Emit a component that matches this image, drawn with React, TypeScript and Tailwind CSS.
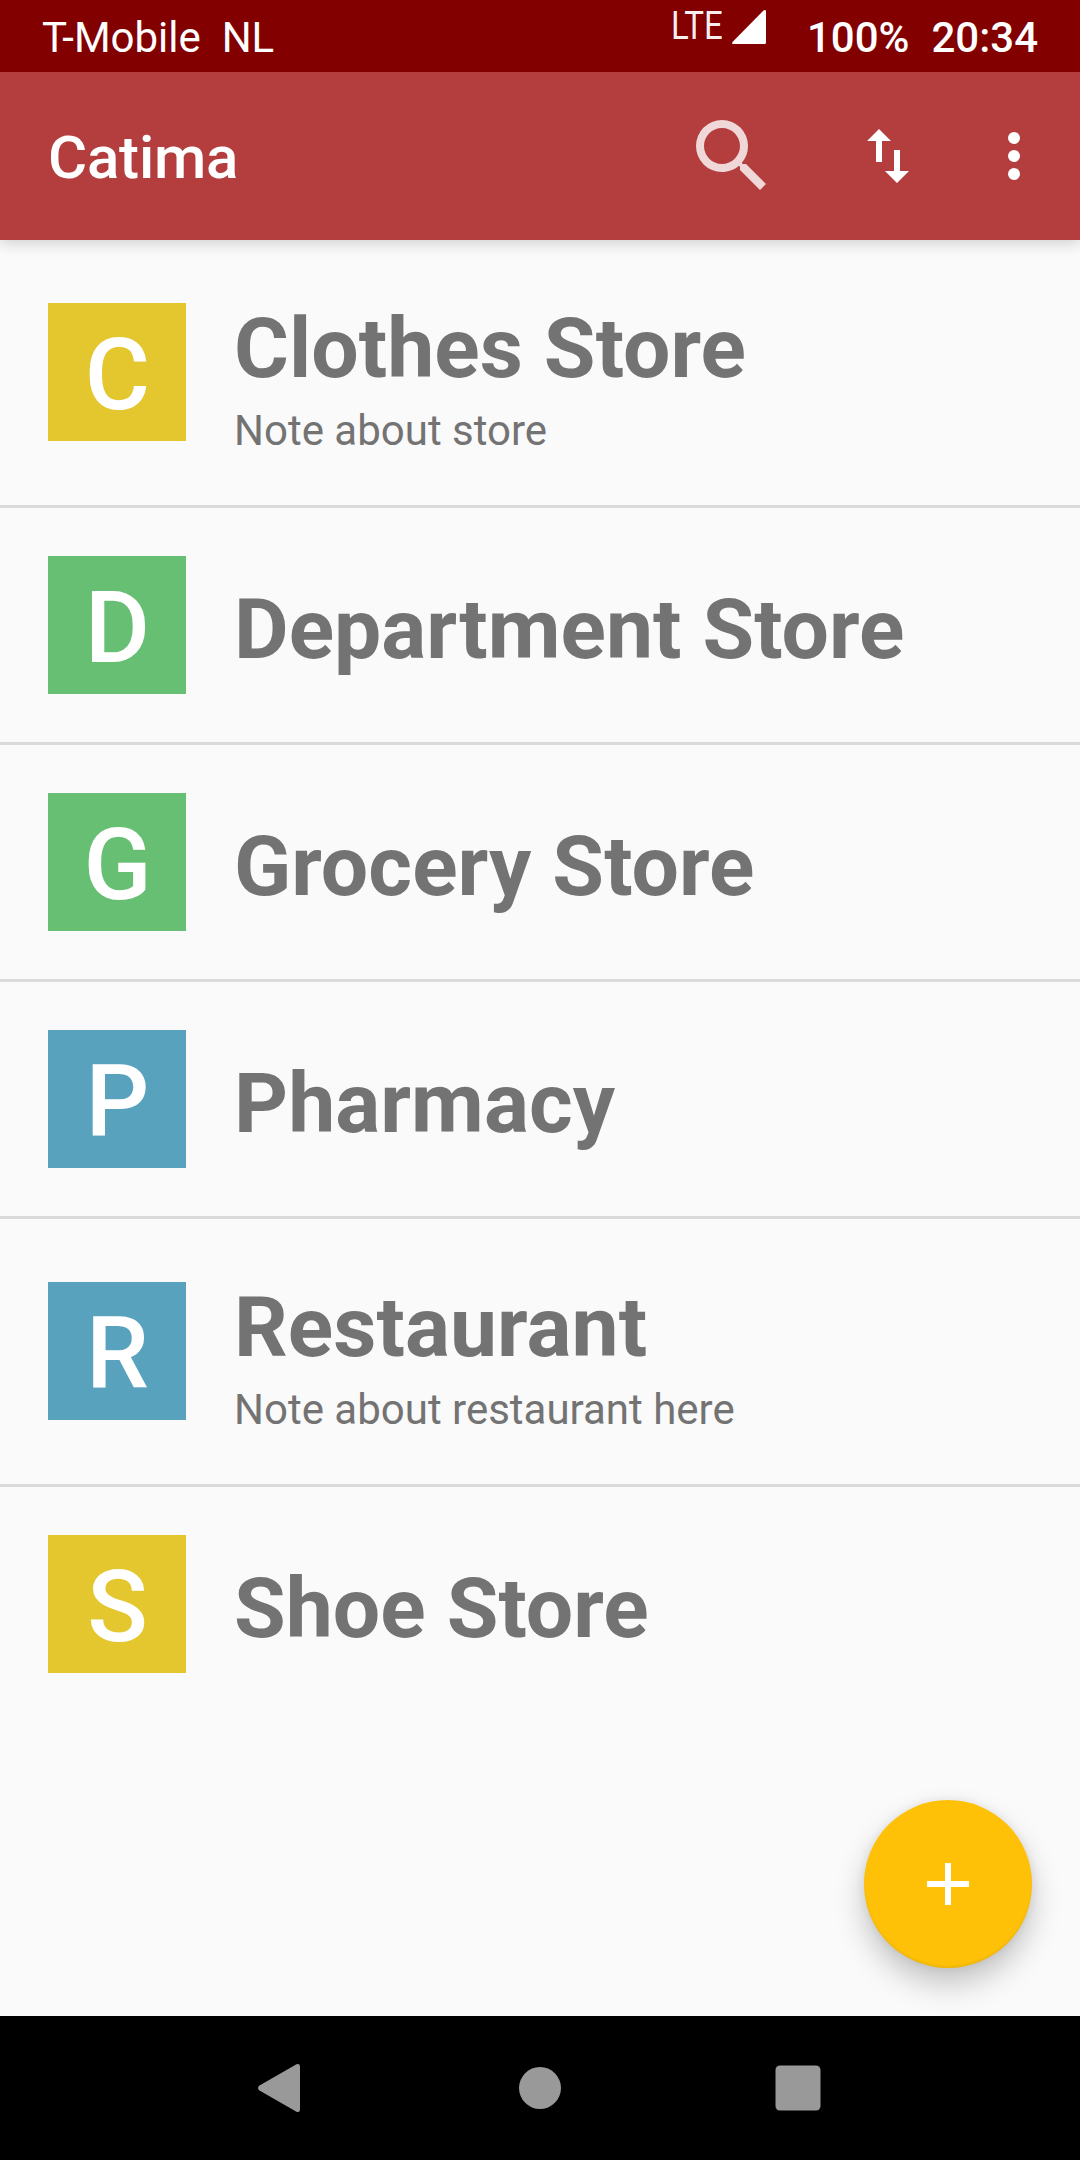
type Card = { letter: string; name: string; note?: string; tile: string };

const cards: Card[] = [
  { letter: 'C', name: 'Clothes Store', note: 'Note about store', tile: 'bg-[#e4c62e]' },
  { letter: 'D', name: 'Department Store', tile: 'bg-[#67bf74]' },
  { letter: 'G', name: 'Grocery Store', tile: 'bg-[#67bf74]' },
  { letter: 'P', name: 'Pharmacy', tile: 'bg-[#59a2be]' },
  { letter: 'R', name: 'Restaurant', note: 'Note about restaurant here', tile: 'bg-[#59a2be]' },
  { letter: 'S', name: 'Shoe Store', tile: 'bg-[#e4c62e]' },
];

function StatusBar() {
  return (
    <header className="relative z-20 flex h-[72px] shrink-0 items-start bg-[#820000] px-[42px] text-[42px] leading-[76px] text-white">
      <span className="whitespace-pre">T-Mobile  NL</span>
      <span className="ml-auto flex items-start">
        <span className="mt-[6px] w-[61px] origin-left scale-x-[0.87] text-[38px] leading-[41px] text-white/95">LTE</span>
        <svg className="mt-[10px] size-[34px]" viewBox="0 0 34 34" fill="white">
          <path d="M34 1.5V32.5Q34 34 32.5 34H1Q-0.6 34 0.5 32L31.5 0.6Q34 -0.8 34 1.5Z" />
        </svg>
      </span>
      <span className="ml-[41px] font-medium">100%</span>
      <span className="ml-[22px] font-medium">20:34</span>
    </header>
  );
}

function Toolbar() {
  return (
    <div className="relative z-10 flex h-[168px] shrink-0 items-center bg-[#b43e3e] pl-12 pr-[30px] text-white shadow-[0_3px_14px_rgba(0,0,0,0.18)]">
      <h1 className="mt-[4px] text-[60px] font-medium leading-none tracking-[-0.2px]">Catima</h1>
      <button className="ml-auto" aria-label="Search">
        <svg className="size-24 opacity-80" viewBox="0 0 24 24" fill="currentColor">
          <path d="M15.5 14h-.79l-.28-.27A6.471 6.471 0 0 0 16 9.5 6.5 6.5 0 1 0 9.5 16c1.61 0 3.09-.59 4.23-1.57l.27.28v.79l5 4.99L20.49 19l-4.99-5zm-6 0C7.01 14 5 11.99 5 9.5S7.01 5 9.5 5 14 7.01 14 9.5 11.99 14 9.5 14z" />
        </svg>
      </button>
      <button className="ml-[72px]" aria-label="Sort">
        <svg className="size-[72px]" viewBox="0 0 24 24" fill="currentColor">
          <path d="M9 3 5 6.99h3V14h2V6.99h3L9 3zm7 14.01V10h-2v7.01h-3L15 21l4-3.99h-3z" />
        </svg>
      </button>
      <button className="ml-[54px]" aria-label="More options">
        <svg className="size-[72px]" viewBox="0 0 24 24" fill="currentColor">
          <circle cx="12" cy="6" r="2" />
          <circle cx="12" cy="12" r="2" />
          <circle cx="12" cy="18" r="2" />
        </svg>
      </button>
    </div>
  );
}

function CardRow({ card }: { card: Card }) {
  return (
    <li className="border-b-[3px] border-[#dadada] last:border-b-0">
      <div className={card.note ? 'flex h-[265px] items-start px-12 pt-[63px]' : 'flex h-[234px] items-start px-12 pt-12'}>
        <div className={`flex size-[138px] shrink-0 justify-center pl-px text-[100px] font-medium leading-[140px] text-white ${card.tile}`}>
          <span className="mt-[2px]">{card.letter}</span>
        </div>
        <div className={card.note ? 'ml-12 -mt-[3px] text-[#737373]' : 'ml-12 mt-[25px] text-[#737373]'}>
          <p className="text-[84px] font-bold leading-[98px] tracking-[0.05px]">{card.name}</p>
          {card.note && <p className="mt-[8px] text-[42px] leading-[50px]">{card.note}</p>}
        </div>
      </div>
    </li>
  );
}

function NavBar() {
  return (
    <nav className="flex h-36 shrink-0 items-center justify-center gap-[186px] bg-black text-[#999999]">
      <svg className="size-[72px]" viewBox="0 0 72 72" fill="currentColor">
        <path d="M54 15V57Q54 61 50.500 59.700L13.500 38.500Q10.500 36 13.500 33.500L50.500 12.300Q54 11 54 15Z" />
      </svg>
      <svg className="size-[72px]" viewBox="0 0 72 72" fill="currentColor">
        <circle cx="36" cy="36" r="21" />
      </svg>
      <svg className="size-[72px]" viewBox="0 0 72 72" fill="currentColor">
        <rect x="13.500" y="13.500" width="45" height="45" rx="4.500" />
      </svg>
    </nav>
  );
}

export default function App() {
  return (
    <div className="flex h-[2160px] w-[1080px] flex-col overflow-hidden bg-[#fafafa] font-['Roboto',sans-serif]">
      <StatusBar />
      <Toolbar />
      <main className="relative flex-1 overflow-hidden">
        <ul>
          {cards.map((card) => (
            <CardRow key={card.name} card={card} />
          ))}
        </ul>
        <button
          aria-label="Add card"
          className="absolute bottom-12 right-12 flex size-[168px] items-center justify-center rounded-full bg-[#ffc107] shadow-[0_16px_30px_rgba(0,0,0,0.22),0_0_10px_rgba(0,0,0,0.08),inset_0_-2px_2px_rgba(0,0,0,0.06)]"
        >
          <svg className="size-[72px]" viewBox="0 0 24 24" fill="white">
            <path d="M19 13h-6v6h-2v-6H5v-2h6V5h2v6h6z" />
          </svg>
        </button>
      </main>
      <NavBar />
    </div>
  );
}
